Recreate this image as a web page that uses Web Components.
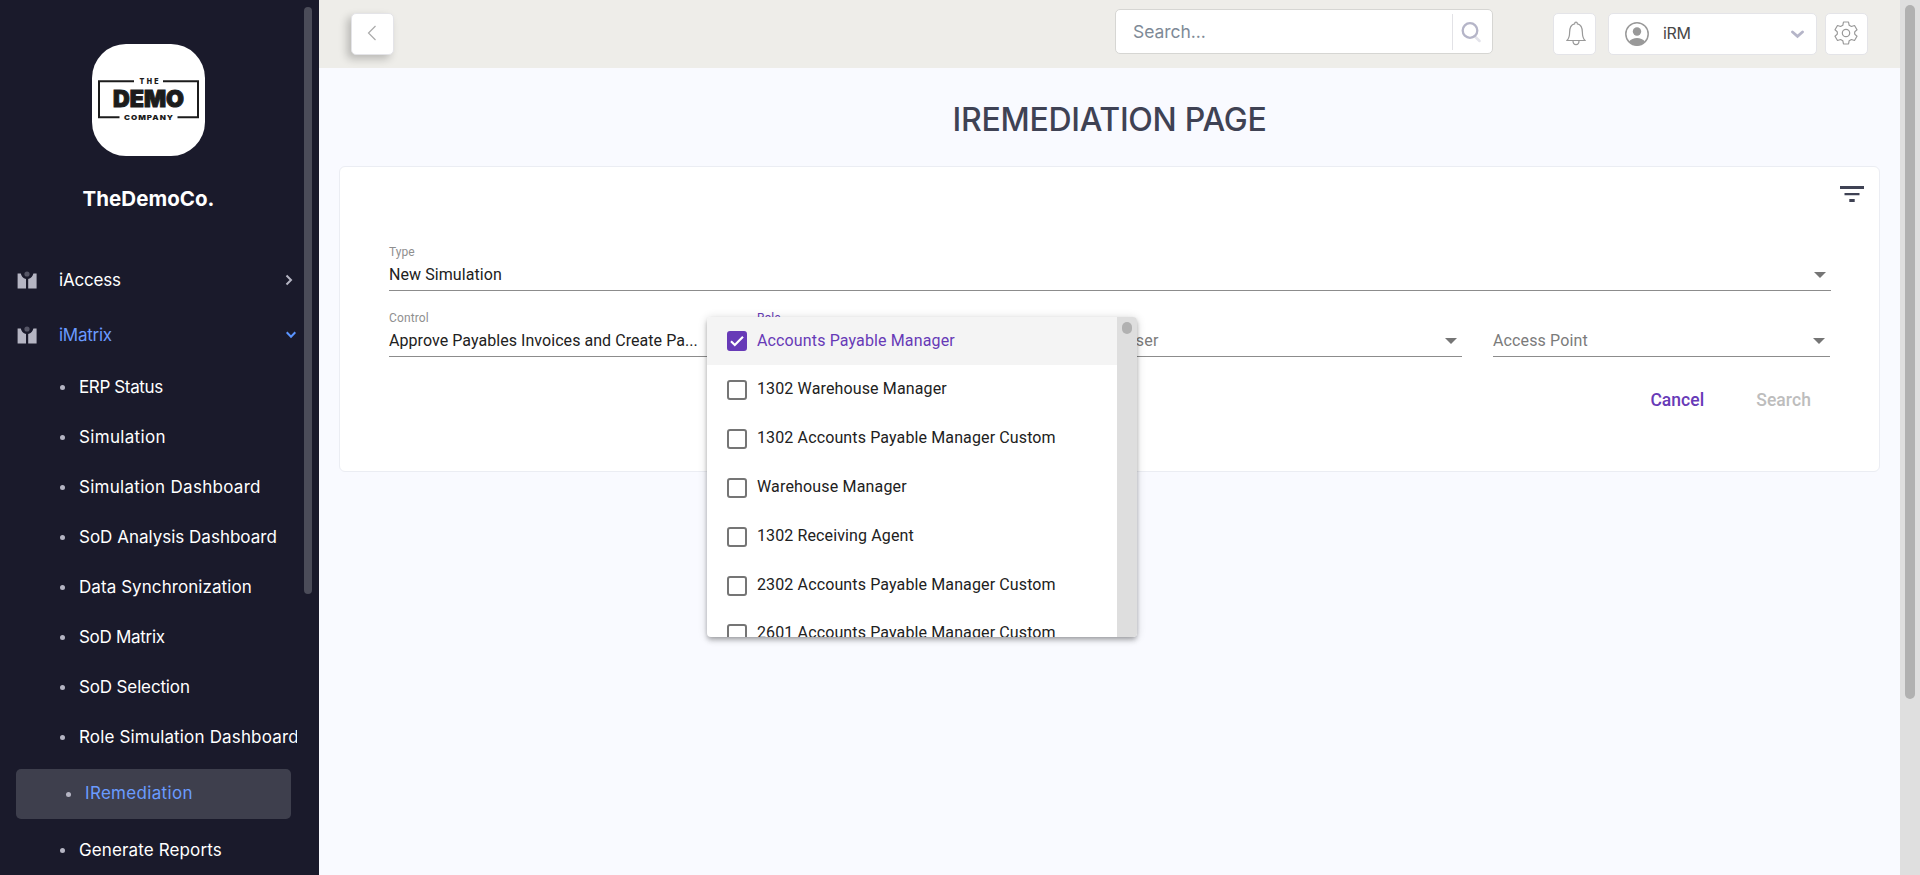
<!DOCTYPE html>
<html lang="en">
<head>
<meta charset="utf-8">
<title>IRemediation</title>
<style>
html,body{margin:0;height:100%;overflow:hidden}
body{font-family:Inter,"Open Sans",sans-serif;background:#f9faff}
</style>
</head>
<body>
<demo-app></demo-app>
<script>
const define = (name, html, extra = {}) => {
  const t = document.createElement('template');
  t.innerHTML = html;
  customElements.define(name, class extends HTMLElement {
    constructor() {
      super();
      this.attachShadow({ mode: 'open' }).append(document.importNode(t.content, true));
    }
    connectedCallback() { if (extra.connected) extra.connected.call(this, this.shadowRoot); }
  });
};

/* Text tracked out to a given width. */
define('fit-text', `<style>:host{display:inline-block;white-space:pre}span{display:inline-block}</style><span><slot></slot></span>`, {
  connected(root) {
    queueMicrotask(() => {
      const s = root.querySelector('span'), n = this.textContent.length;
      s.style.letterSpacing = '0px';
      s.style.letterSpacing = ((+this.getAttribute('w') + 0.8 - s.getBoundingClientRect().width) / n).toFixed(3) + 'px';
    });
  }
});

define('brand-logo', `<style>:host{display:block;width:113px;height:112px}svg{display:block}text{font-family:Inter,sans-serif;font-weight:900;fill:#1c1c1c}</style>
<svg width="113" height="112" viewBox="0 0 113 112">
<rect width="113" height="112" rx="34" fill="#fff"/>
<path d="M42 37.3H7V73.3H27.500M71 37.300H106V73.300H85.500" fill="none" stroke="#1c1c1c" stroke-width="2"/>
<text x="47.500" y="40" font-size="7" textLength="19">THE</text>
<text x="21" y="63" font-size="22.500" textLength="71" lengthAdjust="spacingAndGlyphs" stroke="#1c1c1c" stroke-width="1">DEMO</text>
<text x="32" y="75.700" font-size="6.700" letter-spacing=".8" textLength="50" lengthAdjust="spacingAndGlyphs">COMPANY</text>
</svg>`);

define('nav-group', `<style>
:host{display:flex;align-items:center;height:55px;padding-left:17px;width:279px;color:#fff;font-size:17px}
:host([open]){color:#6a9bff}
.i{width:20px;height:18px;margin-right:22px;flex:none}
.c{margin-left:auto;display:none}
:host([open]) .d{display:block}:host(:not([open])) .r{display:block}
</style>
<svg class="i" viewBox="0 0 20 18"><path d="M.6 2.500H3.800C4.300 5 6 7.200 9 8V17.500H.6ZM19.600 2.500H16.400C15.900 5 14 7.200 11.200 8V17.500H19.600Z" fill="#b5b5c3"/><circle cx="10" cy="3" r="2.600" fill="#565666"/></svg>
<slot></slot>
<svg class="c r" style="margin-right:3px" width="8" height="12" viewBox="0 0 8 12"><path d="M1.500 1.500 6 6 1.500 10.500" fill="none" stroke="#b5b5c3" stroke-width="2"/></svg>
<svg class="c d" width="10" height="8" viewBox="0 0 10 8"><path d="M.7 1.300 5 5.700 9.300 1.300" fill="none" stroke="#5a94ff" stroke-width="2"/></svg>`);

define('nav-item', `<style>
:host{display:flex;align-items:center;height:50px;padding-left:60px;width:237px;overflow:hidden;color:#fff;font-size:17px}
:host([active]){margin:7px 0 6px 16px;padding-left:50px;width:225px;background:#3e3f4d;border-radius:5px;color:#6a9bff}
:host([active]) slot{display:block;margin-top:-2px}
i{width:5px;height:5px;border-radius:50%;background:#b5b5c3;margin-right:14px;flex:none}
</style><i></i><slot></slot>`);

define('side-bar', `<style>
:host{display:block;position:relative;width:319px;height:875px;background:#1a1a2b;overflow:hidden;flex:none}
.b{display:flex;flex-direction:column;align-items:center;width:297px;height:252px;padding-top:44px;box-sizing:border-box}
h1{margin:28px 0 0;font-size:20.500px;line-height:30px;font-weight:700;color:#fff}
.s{position:absolute;left:304px;top:7px;width:8px;height:587px;border-radius:4px;background:#4b4c59}
</style>
<div class="b"><brand-logo></brand-logo><h1><fit-text w="131">TheDemoCo.</fit-text></h1></div>
<nav>
<nav-group><fit-text w="61">iAccess</fit-text></nav-group>
<nav-group open><fit-text w="52">iMatrix</fit-text></nav-group>
<nav-item><fit-text w="83">ERP Status</fit-text></nav-item>
<nav-item><fit-text w="86">Simulation</fit-text></nav-item>
<nav-item><fit-text w="181">Simulation Dashboard</fit-text></nav-item>
<nav-item><fit-text w="197">SoD Analysis Dashboard</fit-text></nav-item>
<nav-item><fit-text w="172">Data Synchronization</fit-text></nav-item>
<nav-item><fit-text w="85">SoD Matrix</fit-text></nav-item>
<nav-item><fit-text w="110">SoD Selection</fit-text></nav-item>
<nav-item><fit-text w="219">Role Simulation Dashboard</fit-text></nav-item>
<nav-item active><fit-text w="107">IRemediation</fit-text></nav-item>
<nav-item><fit-text w="142">Generate Reports</fit-text></nav-item>
</nav><div class="s"></div>`);

define('tool-box', `<style>:host{display:flex;align-items:center;box-sizing:border-box;width:43px;height:42px;background:#fff;border:1px solid #e4e4e8;border-radius:5px;justify-content:center}
:host([raised]){box-shadow:-4px 4px 8px rgba(0,0,0,.22)}</style><slot></slot>`);

define('search-box', `<style>
:host{display:flex;align-items:center;box-sizing:border-box;width:378px;height:45px;background:#fff;border:1px solid #d6d6d3;border-radius:5px;color:#7e8a97;font-size:17.500px;padding-left:17px}
i{width:1px;height:36px;background:#e2e2e6;margin:0 8px 0 auto}svg{margin-right:11px}
</style><fit-text w="72">Search...</fit-text><i></i>
<svg width="20" height="22" viewBox="0 0 20 22"><path d="M14 15.500 18.500 20" stroke="#e3e3ea" stroke-width="2.500" stroke-linecap="round"/><circle cx="9" cy="9.500" r="7.300" fill="none" stroke="#b5b5c8" stroke-width="2.300"/></svg>`);

define('top-bar', `<style>
:host{display:flex;height:68px;box-sizing:border-box;background:#eeede9;padding:13px 32px 0 32px;align-items:flex-start}
search-box{margin:-4px 60px 0 auto}
.u{width:209px;margin:0 8px 0 12px;justify-content:flex-start;color:#484848;font-size:16px}
.u fit-text{margin:-3px 0 0 14px}.u .c{margin:0 12px 0 auto}
</style>
<tool-box raised><svg width="10" height="16" viewBox="0 0 10 16" style="margin:-2px 2px 0 0"><path d="M8.500 1 1.500 8 8.500 15" fill="none" stroke="#aaa" stroke-width="1.200"/></svg></tool-box>
<search-box></search-box>
<tool-box><svg width="20" height="25" viewBox="0 0 20 25" style="margin:0 0 1px 2px" fill="none" stroke="#999" stroke-width="1.200"><path d="M1 19.500C3 17.500 3.600 15 3.600 11.500C3.600 6.500 5.500 3.500 8.600 2.900C8.700 .6 11.300 .6 11.400 2.900C14.500 3.500 16.400 6.500 16.400 11.500C16.400 15 17 17.500 19 19.500Z"/><path d="M7 19.700C7 24.800 13 24.800 13 19.700"/></svg></tool-box>
<tool-box class="u"><svg width="24" height="24" viewBox="0 0 24 24" style="margin-left:16px"><circle cx="12" cy="12" r="11.200" fill="none" stroke="#999" stroke-width="1.500"/><circle cx="12" cy="9.500" r="4.200" fill="#999"/><path d="M4 19.500C7.500 14.800 16.500 14.800 20 19.500C16 25 8 25 4 19.500Z" fill="#999"/></svg><fit-text w="27">iRM</fit-text><svg class="c" width="13" height="9" viewBox="0 0 13 9"><path d="M1.500 2 6.500 6.300 11.500 2" fill="none" stroke="#b5b5c8" stroke-width="2.800" stroke-linecap="round"/></svg></tool-box>
<tool-box><svg width="24" height="24" viewBox="0 0 24 24" style="margin:-3px 0 0 -1px" fill="none" stroke="#999" stroke-width="1.200" stroke-linejoin="round"><circle cx="12" cy="12" r="3.700"/><path d="M9.500 1H14.500L15.200 4.300L17.400 5.500L20.500 4.500L23 8.700L20.700 10.900V13.100L23 15.300L20.500 19.500L17.400 18.500L15.200 19.700L14.500 23H9.500L8.800 19.700L6.600 18.500L3.500 19.500L1 15.300L3.300 13.100V10.900L1 8.700L3.500 4.500L6.600 5.500L8.800 4.300Z"/></svg></tool-box>`);

define('select-field', `<style>
:host{display:block;position:relative;box-sizing:border-box;height:48px;border-bottom:1px solid #8c8c8c;font-family:Roboto,sans-serif}
.l{height:18px;line-height:18px;font-size:12px;color:#8f8f8f}
.v{display:flex;align-items:center;height:25px;margin-top:1px;font-size:16px;color:#212121}
:host([empty]) .v{color:#7b7b7b}:host([focused]) .l{color:#673ab7}
svg{margin:0 5px 0 auto}
</style><div class="l"><slot name="label"></slot></div><div class="v"><slot></slot><svg width="12" height="6" viewBox="0 0 12 6"><path d="M0 0H12L6 6Z" fill="#757575"/></svg></div><slot name="menu"></slot>`);

define('check-option', `<style>
:host{display:flex;align-items:center;height:48.800px;padding-left:20px;color:#212121;font-size:16px}
:host([checked]){height:48px;background:#f4f4f4;color:#673ab7}
i{width:16px;height:16px;border:2px solid #757575;border-radius:3px;margin:2px 10px 0 0;flex:none}
:host([checked]) i{background:#673ab7;border-color:#673ab7;margin-top:0}
svg{display:none}:host([checked]) svg{display:block}
.t{margin-top:-1px}
</style><i><svg width="16" height="16" viewBox="0 0 16 16"><path d="M2 8.300 5.800 12 14 3.800" fill="none" stroke="#fff" stroke-width="2.200"/></svg></i><div class="t"><slot></slot></div>`);

define('option-menu', `<style>
:host{position:absolute;left:-50px;top:8px;width:430px;height:320px;overflow:hidden;background:#fff;border-radius:4px;box-shadow:0 2px 4px -1px rgba(0,0,0,.2),0 4px 5px rgba(0,0,0,.14),0 1px 10px rgba(0,0,0,.16);display:flex;z-index:2}
.o{flex:1}.s{width:20px;background:#dedede}.s i{display:block;width:10px;height:12px;margin:5px;border-radius:5px;background:#b1b1b1}
</style><div class="o"><slot></slot></div><div class="s"><i></i></div>`);

define('filter-panel', `<style>
:host{display:block;box-sizing:border-box;margin:0 20px;height:306px;background:#fff;border:1px solid #ebedf3;border-radius:6px;padding:19px 15px 0 49px;font-family:Roboto,sans-serif}
header{display:flex;justify-content:flex-end;height:57px}
section{width:1442px}
.r{display:grid;grid-template-columns:repeat(4,337px);gap:31px;margin-top:18px}
footer{display:flex;justify-content:flex-end;gap:52px;margin-top:33px;padding-right:20px;font-size:17.500px;line-height:20px;font-weight:500;color:#673ab7}
.off{color:#bdbdbd}
</style>
<header><svg width="24" height="18" viewBox="0 0 24 18"><path d="M0 0H24V3H0ZM4.500 7H19.500V9.300H4.500ZM9.300 13H14.700V16H9.300Z" fill="#3f4254"/></svg></header>
<section>
<select-field><fit-text slot="label" w="25">Type</fit-text><fit-text w="112">New Simulation</fit-text></select-field>
<div class="r">
<select-field><fit-text slot="label" w="39">Control</fit-text><fit-text w="308">Approve Payables Invoices and Create Pa...</fit-text></select-field>
<select-field focused><fit-text slot="label" w="23">Role</fit-text>
<option-menu slot="menu">
<check-option checked><fit-text w="197">Accounts Payable Manager</fit-text></check-option>
<check-option><fit-text w="189">1302 Warehouse Manager</fit-text></check-option>
<check-option><fit-text w="298">1302 Accounts Payable Manager Custom</fit-text></check-option>
<check-option><fit-text w="149">Warehouse Manager</fit-text></check-option>
<check-option><fit-text w="156">1302 Receiving Agent</fit-text></check-option>
<check-option><fit-text w="298">2302 Accounts Payable Manager Custom</fit-text></check-option>
<check-option><fit-text w="298">2601 Accounts Payable Manager Custom</fit-text></check-option>
</option-menu></select-field>
<select-field empty><fit-text w="33">User</fit-text></select-field>
<select-field empty><fit-text w="94">Access Point</fit-text></select-field>
</div>
<footer><fit-text w="53">Cancel</fit-text><fit-text class="off" w="54">Search</fit-text></footer>
</section>`);

define('demo-app', `<style>
:host{display:flex;width:1920px;height:875px}
main{flex:1}
h2{margin:0;height:98px;box-sizing:border-box;padding-top:32px;text-align:center;font-size:32px;line-height:40px;font-weight:500;color:#3f4254}
.s{width:20px;background:#dfdfdf}.s i{display:block;width:10px;height:694px;margin:5px;border-radius:5px;background:#b1b1b1}
</style><side-bar></side-bar><main><top-bar></top-bar><h2><fit-text w="313">IREMEDIATION PAGE</fit-text></h2><filter-panel></filter-panel></main><div class="s"><i></i></div>`);
</script>
</body>
</html>
